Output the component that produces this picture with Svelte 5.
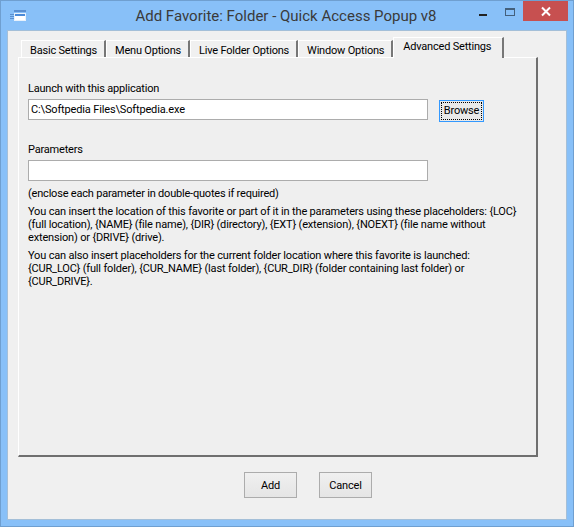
<script>
	const tabs = ['Basic Settings', 'Menu Options', 'Live Folder Options', 'Window Options', 'Advanced Settings'];
	const active = 'Advanced Settings';
</script>

<div class="window">
	<header class="titlebar">
		<svg class="app-icon" width="17" height="12" viewBox="0 0 17 12">
			<rect x="0" y="4" width="4" height="1" fill="#5b8fd0" />
			<rect x="0" y="6" width="4" height="1" fill="#5b8fd0" />
			<rect x="0" y="8" width="4" height="1" fill="#5b8fd0" />
			<rect x="4" y="3" width="12" height="8" fill="#e8f1fb" />
			<rect x="4" y="0.5" width="12" height="1" fill="#2f5fa8" />
			<rect x="5" y="4" width="10" height="2" fill="#4a8ad8" />
			<rect x="5" y="6" width="10" height="4" fill="#fff" />
		</svg>
		<span class="title">Add Favorite: Folder - Quick Access Popup v8</span>
		<div class="controls">
			<span class="min"></span>
			<span class="max"></span>
			<span class="close">
				<svg width="12" height="11" viewBox="0 0 12 11">
					<path d="M2 1.5 L10 9.5 M10 1.5 L2 9.5" stroke="#fff" stroke-width="2" />
				</svg>
			</span>
		</div>
	</header>

	<main class="client">
		<nav class="tabs">
			{#each tabs as tab}
				<div class="tab" class:active={tab === active}>{tab}</div>
			{/each}
		</nav>

		<section class="panel">
			<label class="field-label" for="app">Launch with this application</label>
			<div class="app-row">
				<input id="app" class="text-input" type="text" value="C:\Softpedia Files\Softpedia.exe" />
				<button class="browse" type="button"><span>Browse</span></button>
			</div>

			<label class="field-label params-label" for="params">Parameters</label>
			<input id="params" class="text-input" type="text" />

			<p class="hint">(enclose each parameter in double-quotes if required)</p>
			<p class="help">You can insert the location of this favorite or part of it in the parameters using these placeholders: {'{LOC}'}<br />(full location), {'{NAME}'} (file name), {'{DIR}'} (directory), {'{EXT}'} (extension), {'{NOEXT}'} (file name without<br />extension) or {'{DRIVE}'} (drive).</p>
			<p class="help">You can also insert placeholders for the current folder location where this favorite is launched:<br />{'{CUR_LOC}'} (full folder), {'{CUR_NAME}'} (last folder), {'{CUR_DIR}'} (folder containing last folder) or<br />{'{CUR_DRIVE}'}.</p>
		</section>

		<footer class="actions">
			<button class="action" type="button">Add</button>
			<button class="action" type="button">Cancel</button>
		</footer>
	</main>
</div>

<style>
	:global(body) {
		margin: 0;
	}

	.window {
		box-sizing: border-box;
		width: 574px;
		height: 527px;
		padding: 0 6px 6px 6px;
		display: flex;
		flex-direction: column;
		background: #88c0f8;
		border: 1px solid #6f9fd0;
		font-family: Roboto, 'Liberation Sans', sans-serif;
		font-size: 11px;
		letter-spacing: -0.2px;
		color: #000;
	}

	.titlebar {
		position: relative;
		height: 29px;
		flex: none;
		display: flex;
		align-items: center;
		justify-content: center;
	}

	.app-icon {
		position: absolute;
		left: 3px;
		top: 9px;
	}

	.title {
		font-size: 15px;
		letter-spacing: 0;
		color: #3a3a3a;
		margin-top: 1px;
		margin-right: 2px;
	}

	.controls {
		position: absolute;
		right: -1px;
		top: 0;
		display: flex;
		align-items: flex-start;
	}

	.min {
		width: 8px;
		height: 2px;
		margin: 13px 18px 0 0;
		background: #222;
	}

	.max {
		box-sizing: border-box;
		width: 10px;
		height: 8px;
		margin: 7px 8px 0 0;
		border: 1px solid #44607c;
		border-top-width: 2px;
	}

	.close {
		width: 45px;
		height: 20px;
		background: #c75050;
		display: flex;
		align-items: center;
		justify-content: center;
	}

	.client {
		flex: 1;
		display: flex;
		flex-direction: column;
		background: #f0f0f0;
		border: 1px solid #a4bfd8;
		padding: 6px 10px 0 10px;
	}

	.tabs {
		display: flex;
		align-items: flex-end;
		height: 20px;
		padding-left: 3px;
		position: relative;
		z-index: 1;
	}

	.tab {
		box-sizing: border-box;
		height: 17px;
		padding: 2px 7px 0 8px;
		background: #f0f0f0;
		border-top: 1px solid #fff;
		border-left: 1px solid #fff;
		border-right: 2px solid #777;
		line-height: 15px;
		white-space: nowrap;
	}

	.tab.active {
		height: 21px;
		margin-bottom: -1px;
		padding: 1px 11px 0 9px;
		background: #efefef;
	}

	.panel {
		box-sizing: border-box;
		width: 520px;
		height: 400px;
		padding: 24px 9px 0 9px;
		background: #efefef;
		border-top: 1px solid #fff;
		border-left: 1px solid #fff;
		border-right: 2px solid #6f6f6f;
		border-bottom: 2px solid #6f6f6f;
	}

	.field-label {
		display: block;
		height: 14px;
		line-height: 14px;
	}

	.app-row {
		display: flex;
		align-items: flex-start;
		margin-top: 3px;
	}

	.text-input {
		box-sizing: border-box;
		width: 400px;
		height: 21px;
		padding: 0 2px 1px;
		border: 1px solid #acacac;
		background: #fff;
		font: inherit;
		letter-spacing: -0.15px;
		display: block;
		outline: none;
		margin-top: 3px;
	}

	.app-row .text-input {
		margin-top: 0;
	}

	.browse {
		box-sizing: border-box;
		width: 45px;
		height: 22px;
		margin: 1px 0 0 11px;
		padding: 1px;
		border: 1px solid #3399ff;
		background: #e9e9e9;
		font: inherit;
		letter-spacing: inherit;
		color: #000;
	}

	.browse span {
		display: block;
		height: 100%;
		line-height: 16px;
		border: 1px dotted #000;
		box-sizing: border-box;
	}

	.params-label {
		margin-top: 21px;
	}

	.hint {
		margin: 6px 0 0;
		line-height: 13px;
	}

	.help {
		margin: 5px 0 0;
		line-height: 13px;
		letter-spacing: -0.17px;
		white-space: nowrap;
	}

	.actions {
		display: flex;
		gap: 22px;
		margin-top: 15px;
		padding-left: 226px;
	}

	.action {
		box-sizing: border-box;
		width: 53px;
		height: 26px;
		border: 1px solid #acacac;
		background: linear-gradient(#f0f0f0, #e5e5e5);
		font: inherit;
		letter-spacing: inherit;
		color: #000;
		padding: 0;
	}
</style>
